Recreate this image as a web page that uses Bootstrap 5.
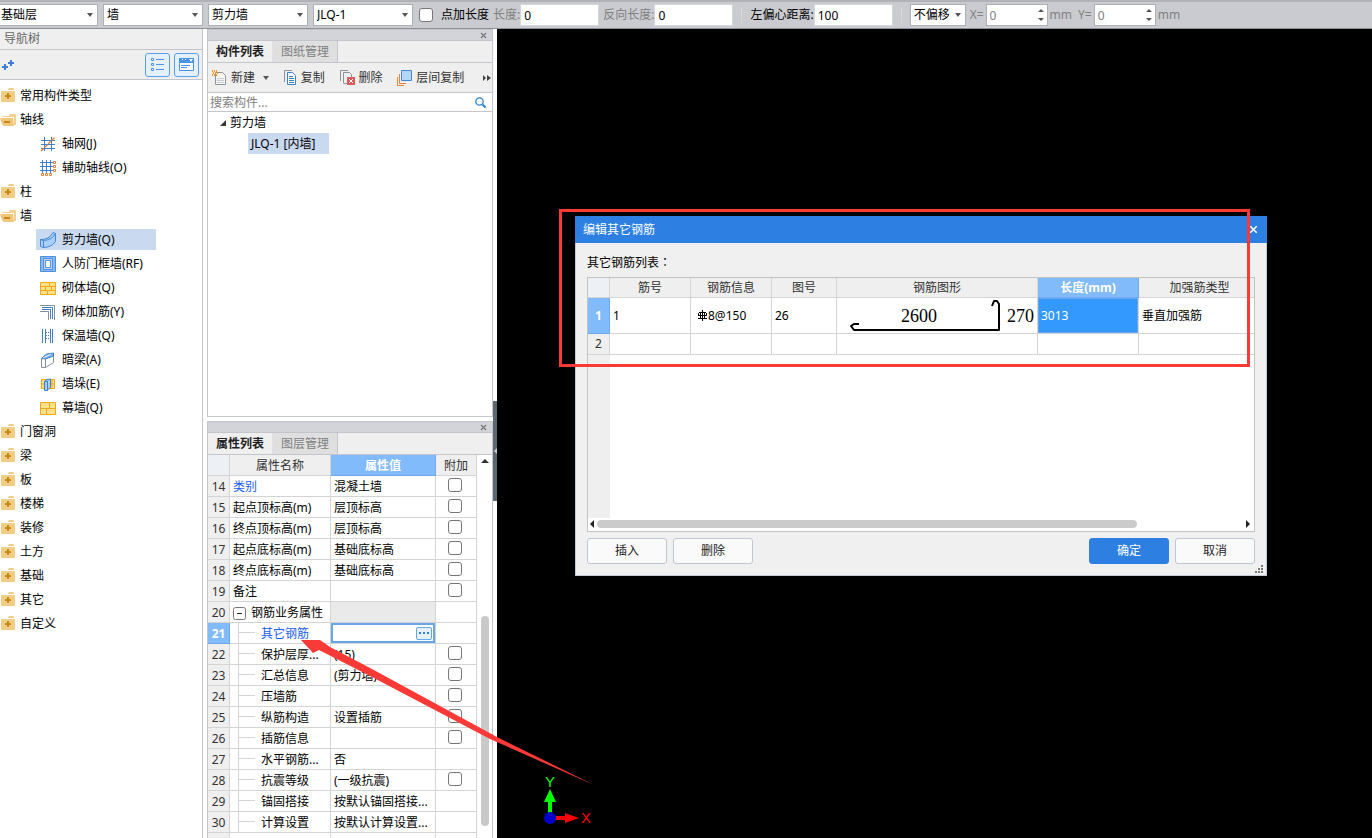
<!DOCTYPE html>
<html lang="zh-CN">
<head>
<meta charset="utf-8">
<meta name="viewport" content="width=device-width, initial-scale=1">
<title>编辑其它钢筋</title>
<link href="https://cdn.jsdelivr.net/npm/bootstrap@5.3.0/dist/css/bootstrap.min.css" rel="stylesheet">
<script src="https://cdn.jsdelivr.net/npm/bootstrap@5.3.0/dist/js/bootstrap.bundle.min.js" defer></script>
<style>
:root{--line:#c3c5cb;--grid:#d4d4d4;--face:#efefef;--pick:#c9d9f0;--head:#82bbfb;--blue:#2d80e2}
body{font-family:"Noto Sans","Noto Sans CJK SC",sans-serif;font-size:12px;line-height:18px;color:#000;background:#fff}
svg{display:block;flex:none}
button{font:inherit;color:inherit}
/* option bar */
.optbar{height:29px;background:#c9cbd0;border-top:2px solid #b0b2b8;border-bottom:1px solid #8d9096;white-space:nowrap}
.optbar .form-select,.optbar .form-control{font-size:12px;line-height:18px;border-radius:0;border:1px solid #adb0b5;padding:0 3px;height:22px;min-height:0;color:#000;flex:none}
.optbar .form-select{width:100px;padding:0 16px 0 3px;background-position:right 4px center;background-size:6px 4px;--bs-form-select-bg-img:url("data:image/svg+xml,%3csvg xmlns='http://www.w3.org/2000/svg' viewBox='0 0 6 4'%3e%3cpath fill='%23555' d='M0 0h6L3 4z'/%3e%3c/svg%3e");background-image:var(--bs-form-select-bg-img)}
.optbar .first-select{width:98px;border-left:0;padding-left:1px}
.optbar .picks{gap:5px;margin-right:6px}
.optbar .narrow{width:56px}
.optbar .form-control.plain{width:79px;border-color:#d4d6da}
.optbar .dimmed,.optbar .spin .form-control{color:#808080}
.offsets{gap:2px}
.spin .form-control{width:62px}
.spin svg{position:absolute;right:4px;top:5px}
.vsep{width:1px;height:16px;background:#d9d9d4}
.form-check-input.tick{width:14px;height:14px;margin:0;border:1px solid #777;border-radius:3px;background-color:#fff;flex:none}
/* navigation tree */
.navpane{width:203px;border-right:1px solid var(--line);flex:none}
.navhead{height:21px;background:var(--face);border-bottom:1px solid var(--line);color:#666;padding:1px 0 0 4px}
.navtools{height:30px;background:var(--face);border-bottom:1px solid var(--line);padding-right:3px}
.toolbtn{width:25px;height:24px;border:1px solid #56a0f0;border-radius:3px;background:#e6f0fc;padding:0}
.treelist{padding:4px 0 0}
.treelist a{color:#000;text-decoration:none}
.treelist .grp{height:24px;gap:4px}
.treelist .leaf{height:21px;margin:1px 46px 2px 36px;padding-left:4px;gap:6px}
.treelist .leaf.on,.objtree .on{background:var(--pick)}
/* docked panels */
.dock{width:286px;margin-left:4px;flex:none}
.dockpanel{border:1px solid var(--line)}
.upper{flex:0 0 48%}
.lower{border-bottom:0}
.grip{height:11px;background:#d3d4da;border-bottom:1px solid var(--line);padding-right:5px}
.grip button,.plainbtn{border:0;background:none;padding:0}
.docktabs{background:var(--face);border-bottom:1px solid var(--line);height:22px;flex-wrap:nowrap}
.docktabs .nav-link{height:21px;width:65px;padding:1px 0 0;text-align:center;border:0;border-right:1px solid var(--line);border-radius:0;color:#808080;background:#dfdfe0}
.docktabs .nav-link.active{color:#222;font-weight:700;background:var(--face)}
.cmds{height:30px;background:var(--face);border-bottom:1px solid var(--line);color:#333;padding:0 1px 0 4px;white-space:nowrap}
.finder{height:19px;border-bottom:1px solid var(--line);padding-right:6px}
.finder .form-control{border:0;padding:1px 2px 0;height:18px;min-height:0;font-size:12px;line-height:17px;border-radius:0}
.finder .form-control::placeholder{color:#808080}
.objtree{line-height:21px}
.objtree .on{margin-left:40px;padding:0 8px 0 3px;width:81px;white-space:nowrap}
/* grids */
.sheet{table-layout:fixed;border-collapse:separate;border-spacing:0;margin:0;line-height:18px}
.sheet th,.sheet td{border-right:1px solid var(--grid);border-bottom:1px solid var(--grid);padding:0 3px;height:21px;white-space:nowrap;overflow:hidden;vertical-align:middle;font-weight:400;background:#fff}
.sheet thead th{background:var(--face);text-align:center;color:#333}
.sheet thead th:first-child{background:#edf0f5}
.sheet tbody th{background:var(--face);text-align:center;padding:0;color:#333}
.sheet thead th.hot,.sheet tbody th.hot{background:var(--head);color:#fff;font-weight:700;border-color:#6faaf0}
.sheet a{color:#1a5cf5;text-decoration:none}
.sheet.props{width:269px}
.props thead th,.props tbody th,.props tbody td{padding-top:2px}
.props tbody td:last-child{padding:0 4px 2px 2px}
.props tbody td.editing{padding-top:0}
.props .tick{display:block;margin:0 auto}
.props td.sub{padding-left:31px;background:linear-gradient(var(--grid),var(--grid)) 8px 0/1px 100% no-repeat,linear-gradient(var(--grid),var(--grid)) 8px 9px/17px 1px no-repeat,#fff}
.props td.void{background:#eaeaea}
.props td.editing{box-shadow:inset 0 0 0 2px #68a6ea}
.vbar{width:15px;flex:none}
.vbar .thumb{width:8px;background:#c9c9c9;border-radius:4px;margin:153px auto 0;height:210px}
.morebtn{width:16px;height:13px;border:1px solid #68a6ea;border-radius:2px;background:#e6f1fd;padding:0}
/* drawing area */
.canvas{background:#000;margin-left:4px;min-width:0}
.collapser{position:absolute;left:-4px;top:46%;width:4px;height:100px;border:0;padding:0;background:#5d6770}
.ucs{position:absolute;left:36px;bottom:0}
.dlg{position:absolute;left:78px;top:187px;width:692px;background:#f0f0f0;border:1px solid #c5cbd3;border-top:0}
.dlghead{height:27px;margin:0 -1px;background:var(--blue);color:#fff;padding:0 9px 0 8px}
.dlgbody{padding:10px 11px 11px}
.colon{font-family:"Noto Sans CJK TC",sans-serif}
.listbox{border:1px solid #c3c3c3;background:linear-gradient(var(--face),var(--face)) 0 0/22px 240px no-repeat,#fff;height:255px;margin-top:5px;overflow:hidden}
.rebar{width:673px}
.rebar thead th{height:20px}
.rebar .tall td,.rebar .tall th{height:36px}
.rebar td.cell-on{background:#3399ff;color:#fff;box-shadow:inset 0 0 0 1px #68a6ea}
.rebar .tall .pic{padding:0}
.hbar{height:14px;padding:0 4px 0 2px;gap:3px}
.hbar .thumb{height:8px;width:540px;border-radius:4px;background:#cbcbcb}
.dlgbtns{gap:6px;margin-top:6px}
.dlg .btn{width:80px;height:26px;font-size:12px;line-height:18px;padding:0;border-radius:3px;background:#fafafa;border-color:#bfc5d3;color:#222}
.dlg .btn.btn-primary{background:var(--blue);border-color:var(--blue);color:#fff}
.sizer{position:absolute;right:3px;bottom:2px}
/* markup over the workspace */
.mark-box{position:absolute;left:559px;top:209px;width:691px;height:158px;border:3px solid #fb3a38;pointer-events:none;z-index:5}
.mark-arrow{position:absolute;left:300px;top:638px;pointer-events:none;z-index:5}
</style>
</head>
<body class="vh-100 d-flex flex-column overflow-hidden position-relative">

<svg width="0" height="0" class="position-absolute" aria-hidden="true">
  <symbol id="i-closed" viewBox="0 0 16 16"><path fill="#f2cd87" d="M8 2q0-2 2-2h3q1 0 1 1v1zM1 4q0-1 1-1h12q1 0 1 1v9q0 1-1 1H2q-1 0-1-1z"/><path fill="#c88a1c" d="M7 5h2v2h2v2H9v2H7V9H5V7h2z"/></symbol>
  <symbol id="i-open" viewBox="0 0 16 16"><path fill="#f3cf8b" d="M2 4h7l1-2h5q1 0 1 1v10h-2V5H3z"/><path fill="#efc67a" d="M0 6h13l1 8H4Q2 14 0 6z"/><path fill="#c88a1c" d="M4 9h6v2H4z"/></symbol>
  <symbol id="i-grid" viewBox="0 0 16 16"><path stroke="#3f7fce" d="M4.500 1v14M11.500 1v14M1 4.500h14M1 8.500h14M1 12.500h14"/><path stroke="#e8803a" stroke-width="1.400" stroke-dasharray="4 1" d="M1 15 15 1"/></symbol>
  <symbol id="i-grid2" viewBox="0 0 16 16"><path stroke="#3f7fce" d="M2.500 0v13M6.500 0v13M10.500 0v13M0 2.500h13M0 6.500h13M0 10.500h13"/><path fill="#fff" stroke="#e8803a" d="M1.500 13.500h2v2h-2zM5.500 13.500h2v2h-2zM9.500 13.500h2v2h-2zM13.500 1.500h2v2h-2zM13.500 5.500h2v2h-2zM13.500 9.500h2v2h-2z"/></symbol>
  <symbol id="i-shear" viewBox="0 0 16 16"><path fill="#a9cef8" stroke="#4388d6" stroke-linejoin="round" d="M.5 7.500Q9 8 13 .5l2.500 1v8Q12 15 4 15.500l-3.500-1z"/><path fill="none" stroke="#4388d6" d="M.5 7.500l3 1v7M3.500 8.500Q12 8 15.500 1.500"/></symbol>
  <symbol id="i-frame" viewBox="0 0 16 16"><path fill="#8bb9f3" stroke="#4d8ee0" d="M.5.500h15v15H.500z"/><path fill="#c4dcfa" stroke="#4d8ee0" d="M3.500 2.500h9v11h-9z"/><path fill="#fff" stroke="#4d8ee0" d="M5.500 4.500h5v7h-5z"/></symbol>
  <symbol id="i-brick" viewBox="0 0 16 16"><path fill="#fde08b" stroke="#f0a911" d="M.5 2.500h15v12H.500zM.500 6.500h15M.500 10.500h15M9.500 2.500v4M5.500 6.500v4M11.500 6.500v4M7.500 10.500v4"/></symbol>
  <symbol id="i-tie" viewBox="0 0 16 16"><g fill="none"><path stroke="#8a8f98" d="M0 1.500h14.500V16M0 7.500h8.500V16"/><path stroke="#3f7fce" d="M2 3.500h10.500V15M2 5.500h8.500V15"/></g></symbol>
  <symbol id="i-insul" viewBox="0 0 16 16"><path stroke="#3f7fce" d="M2.500 1v14M5.500 1v14M10.500 1v14M12.500 1v14"/><path stroke="#3f7fce" stroke-dasharray="1 1" d="M6 4.500h5M6 7.500h5M6 10.500h5"/></symbol>
  <symbol id="i-beam" viewBox="0 0 16 16"><path fill="#fff" stroke="#878e98" d="M1.500 6.500h4v9h-4zM5.500 15.500l8-5v-9"/><path fill="#82b4ef" stroke="#3f7fce" d="M1.500 6.500l5-4.500 7-1v3l-8 3z"/><path stroke="#e3effc" d="M3 6l8-4"/></symbol>
  <symbol id="i-pier" viewBox="0 0 16 16"><path fill="#fde08b" stroke="#f0a911" d="M1.500 3.500h13v9h-13zM1 8h14M12 3v9"/><path fill="#a9cef8" stroke="#3f7fce" d="M4.500 5.500h3v9h-3zM7.500 14l3-2.500V3L7 3.500 4.500 5.500h3z"/></symbol>
  <symbol id="i-curtain" viewBox="0 0 16 16"><path fill="#fde08b" stroke="#f0a911" d="M.5 2.500h15v12H.500zM.500 8.500h15M9.500 2.500v6M6.500 8.500v6"/></symbol>
  <symbol id="i-x" viewBox="0 0 7 7"><path stroke="currentColor" stroke-width="1.200" d="M1 1l5 5M6 1 1 6"/></symbol>
</svg>

<form class="optbar d-flex align-items-center flex-shrink-0">
  <div class="picks d-flex">
    <select class="form-select first-select" aria-label="楼层"><option>基础层</option></select>
    <select class="form-select" aria-label="构件分类"><option>墙</option></select>
    <select class="form-select" aria-label="构件类型"><option>剪力墙</option></select>
    <select class="form-select" aria-label="构件"><option>JLQ-1</option></select>
  </div>
  <input class="form-check-input tick" type="checkbox" id="ptlen">
  <label for="ptlen" class="ms-2">点加长度</label>
  <label for="len" class="dimmed ms-1">长度:</label><input id="len" class="form-control plain" value="0">
  <label for="rlen" class="dimmed ms-1">反向长度:</label><input id="rlen" class="form-control plain" value="0">
  <span class="vsep mx-2"></span>
  <label for="ecc">左偏心距离:</label><input id="ecc" class="form-control plain" value="100">
  <span class="vsep mx-2"></span>
  <select class="form-select narrow" aria-label="偏移"><option>不偏移</option></select>
  <div class="offsets d-flex align-items-center ms-1">
    <label for="dx" class="dimmed">X=</label>
    <span class="spin position-relative"><input id="dx" class="form-control" value="0"><svg width="6" height="12" fill="#555"><path d="M0 3l3-3 3 3zM0 9l3 3 3-3z"/></svg></span>
    <span class="dimmed">mm</span>
    <label for="dy" class="dimmed ms-1">Y=</label>
    <span class="spin position-relative"><input id="dy" class="form-control" value="0"><svg width="6" height="12" fill="#555"><path d="M0 3l3-3 3 3zM0 9l3 3 3-3z"/></svg></span>
    <span class="dimmed">mm</span>
  </div>
</form>

<main class="d-flex flex-grow-1" style="min-height:0">
  <nav class="navpane" aria-label="导航树">
    <div class="navhead">导航树</div>
    <div class="navtools d-flex align-items-center gap-1">
      <button class="plainbtn me-auto" aria-label="添加"><svg width="15" height="14" stroke="#3a7fd5" stroke-width="2"><path d="M2 9h6M5 6v6M8 5h6M11 2v6"/></svg></button>
      <button class="toolbtn d-flex align-items-center justify-content-center" aria-label="列表"><svg width="13" height="14" fill="none" stroke="#4a93ea"><path d="M.5.500h2v2h-2zM.500 5.500h2v2h-2zM.500 10.500h2v2h-2zM5 1.500h8M5 6.500h8M5 11.500h8"/></svg></button>
      <button class="toolbtn d-flex align-items-center justify-content-center" aria-label="面板"><svg width="15" height="13" fill="none" stroke="#4a93ea"><path d="M.5.500h14v12H.500z" fill="#fff"/><path fill="#4a93ea" d="M.5.500h14v4H.500z"/><path d="M2 7.500h9M2 9.500h6"/><path fill="#fff" stroke="none" d="M10 1h4l-2 3zM3 1h1v1H3zM6 1h1v1H6z"/></svg></button>
    </div>
    <div class="treelist d-flex flex-column" id="tree"></div>
  </nav>

  <div class="dock d-flex flex-column">
    <section class="dockpanel upper">
      <div class="grip d-flex align-items-center justify-content-end"><button aria-label="关闭" style="color:#777"><svg width="7" height="7"><use href="#i-x"/></svg></button></div>
      <div class="nav nav-tabs docktabs"><button class="nav-link active">构件列表</button><button class="nav-link">图纸管理</button></div>
      <div class="cmds d-flex align-items-center justify-content-between">
        <button class="plainbtn d-flex align-items-center gap-1"><svg width="15" height="15" fill="none"><path fill="#f7f7f7" stroke="#8b939c" d="M3.500 2.500h7l3 3v9h-10z"/><path stroke="#c9ccd1" d="M5 8.500h7M5 10.500h7M5 12.500h7"/><path stroke="#f0941f" stroke-width="2" stroke-dasharray="1 1" d="M0 1h5M1 3h5M0 5h5"/></svg>新建<svg class="ms-1" width="6" height="4" fill="#555"><path d="M0 0h6L3 4z"/></svg></button>
        <button class="plainbtn d-flex align-items-center gap-1"><svg width="13" height="15" fill="none"><path stroke="#8b939c" d="M.5 12V.500H8"/><path fill="#fff" stroke="#3f7fce" d="M3.500 2.500h5l3 3v9h-8z"/><path stroke="#3f7fce" d="M5 6.500h4M5 8.500h5M5 10.500h5M5 12.500h5"/></svg>复制</button>
        <button class="plainbtn d-flex align-items-center gap-1"><svg width="15" height="15" fill="none"><path stroke="#8b939c" d="M.5 11V.500H8M3.500 13V2.500h6l2 2V7M3.500 13.500H7"/><path fill="#dd5a5a" d="M7 7h8v8H7z"/><path stroke="#fff" d="M9 9l4 4M13 9l-4 4"/></svg>删除</button>
        <button class="plainbtn d-flex align-items-center gap-1"><svg width="15" height="16" fill="none"><path stroke="#e8803a" d="M.5 7v8.500H7"/><path stroke="#e8803a" d="M2.500 4v9.500H9"/><path fill="#b5d6fb" stroke="#4388d6" d="M4.500.500h10v10h-10z"/></svg>层间复制</button>
        <button class="plainbtn ms-1" aria-label="更多"><svg width="8" height="6" fill="#444"><path d="M0 0l3 3-3 3zM4 0l4 3-4 3z"/></svg></button>
      </div>
      <div class="finder d-flex align-items-center"><input class="form-control" placeholder="搜索构件..." aria-label="搜索构件"><svg width="11" height="11" fill="none" stroke="#2a80c8"><circle cx="4.500" cy="4.500" r="3.700" stroke-width="1.300"/><path stroke-width="2" d="M7.500 7.500l3 3"/></svg></div>
      <div class="objtree">
        <div class="d-flex align-items-center ps-2"><svg class="mx-1" width="6" height="6" fill="#333"><path d="M6 0v6H0z"/></svg>剪力墙</div>
        <div class="on">JLQ-1 [内墙]</div>
      </div>
    </section>

    <section class="dockpanel lower flex-grow-1 mt-1 overflow-hidden">
      <div class="grip d-flex align-items-center justify-content-end"><button aria-label="关闭" style="color:#777"><svg width="7" height="7"><use href="#i-x"/></svg></button></div>
      <div class="nav nav-tabs docktabs"><button class="nav-link active">属性列表</button><button class="nav-link">图层管理</button></div>
      <div class="d-flex">
        <table class="sheet props">
          <colgroup><col style="width:22px"><col style="width:101px"><col style="width:105px"><col style="width:41px"></colgroup>
          <thead><tr><th></th><th>属性名称</th><th class="hot">属性值</th><th>附加</th></tr></thead>
          <tbody id="props"></tbody>
        </table>
        <div class="vbar"><svg class="mx-auto mt-1" width="8" height="4" fill="#333"><path d="M0 4l4-4 4 4z"/></svg><div class="thumb"></div></div>
      </div>
    </section>
  </div>

  <section class="canvas flex-grow-1 position-relative">
    <button class="collapser" aria-label="折叠"><svg width="4" height="6" fill="#c9ced3"><path d="M4 0v6L1 3z"/></svg></button>
    <svg class="ucs" width="64" height="64" font-family="Liberation Sans" font-size="15"><path fill="#0f0" d="M15 22h4v22h-4zM11 28l6-13 6 13z"/><path fill="#f00" d="M17 42h17v4H17zM32 39l14 5-14 5z"/><circle cx="17" cy="44" r="6" fill="#0000c8"/><text x="12" y="13" fill="#0f0">Y</text><text x="48" y="49" fill="#f00">X</text></svg>

    <div class="dlg" role="dialog" aria-labelledby="dlgtitle">
      <div class="dlghead d-flex align-items-center justify-content-between"><span id="dlgtitle">编辑其它钢筋</span><button class="plainbtn" aria-label="关闭"><svg width="9" height="9"><use href="#i-x"/></svg></button></div>
      <div class="dlgbody">
        <div>其它钢筋列表<span class="colon" lang="zh-TW">：</span></div>
        <div class="listbox d-flex flex-column">
          <table class="sheet rebar">
            <colgroup><col style="width:22px"><col style="width:81px"><col style="width:81px"><col style="width:65px"><col style="width:201px"><col style="width:101px"><col style="width:122px"></colgroup>
            <thead><tr><th></th><th>筋号</th><th>钢筋信息</th><th>图号</th><th>钢筋图形</th><th class="hot">长度(mm)</th><th>加强筋类型</th></tr></thead>
            <tbody>
              <tr class="tall"><th class="hot">1</th><td>1</td><td><span class="d-flex align-items-center ps-1"><svg width="10" height="11" fill="none" stroke="#000"><path d="M4.500 0v11M2.500 2v6M6.500 2v6M0 8.500h9M1 2.500h7M.500 3v3M8.500 3v3M0 5.500h9"/></svg>8@150</span></td><td>26</td>
                <td class="pic"><svg width="200" height="35" font-family="Liberation Serif" font-size="18"><path fill="none" stroke="#000" stroke-width="2" stroke-linejoin="round" d="M22 26h-5l-3 2 3 4h145V6l-2-3h-3l-2 5"/><text x="64" y="24">2600</text><text x="170" y="24">270</text></svg></td>
                <td class="cell-on">3013</td><td>垂直加强筋</td></tr>
              <tr><th>2</th><td></td><td></td><td></td><td></td><td></td><td></td></tr>
            </tbody>
          </table>
          <div class="hbar d-flex align-items-center mt-auto"><svg width="4" height="8" fill="#222"><path d="M4 0v8L0 4z"/></svg><div class="thumb"></div><svg class="ms-auto" width="4" height="8" fill="#222"><path d="M0 0v8l4-4z"/></svg></div>
        </div>
        <div class="dlgbtns d-flex">
          <button class="btn btn-light">插入</button><button class="btn btn-light">删除</button>
          <button class="btn btn-primary ms-auto">确定</button><button class="btn btn-light">取消</button>
        </div>
      </div>
      <svg class="sizer" width="8" height="8" fill="#777"><path d="M6 0h2v2H6zM3 3h2v2H3zM6 3h2v2H6zM0 6h2v2H0zM3 6h2v2H3zM6 6h2v2H6z"/></svg>
    </div>
  </section>
</main>

<div class="mark-box"></div>
<svg class="mark-arrow" width="296" height="148"><path fill="#fb3a38" d="M1 2H20L30 9 72 31 197 99 294 147 190 101 72 39 19 12 13 15z"/></svg>

<script>
const nav = [
  ['closed','常用构件类型'],['open','轴线'],['','轴网(J)','grid'],['','辅助轴线(O)','grid2'],['closed','柱'],['open','墙'],
  ['','剪力墙(Q)','shear',1],['','人防门框墙(RF)','frame'],['','砌体墙(Q)','brick'],['','砌体加筋(Y)','tie'],['','保温墙(Q)','insul'],
  ['','暗梁(A)','beam'],['','墙垛(E)','pier'],['','幕墙(Q)','curtain'],['closed','门窗洞'],['closed','梁'],['closed','板'],
  ['closed','楼梯'],['closed','装修'],['closed','土方'],['closed','基础'],['closed','其它'],['closed','自定义']];
document.getElementById('tree').innerHTML = nav.map(([folder,name,icon,on]) =>
  `<a href="#" class="d-flex align-items-center ${folder ? 'grp' : 'leaf'} ${on ? 'on' : ''}"><svg width="16" height="16"><use href="#i-${folder || icon}"/></svg>${name}</a>`).join('');

// name, value, has tick box, kind
const rows = [
  ['<a href="#">类别</a>','混凝土墙',1],['起点顶标高(m)','层顶标高',1],['终点顶标高(m)','层顶标高',1],['起点底标高(m)','基础底标高',1],
  ['终点底标高(m)','基础底标高',1],['备注','',1],['钢筋业务属性','',0,'group'],['<a href="#">其它钢筋</a>','',0,'edit'],
  ['保护层厚...','(15)',1,'sub'],['汇总信息','(剪力墙)',1,'sub'],['压墙筋','',1,'sub'],['纵筋构造','设置插筋',1,'sub'],
  ['插筋信息','',1,'sub'],['水平钢筋...','否',0,'sub'],['抗震等级','(一级抗震)',1,'sub'],['锚固搭接','按默认锚固搭接...',0,'sub'],
  ['计算设置','按默认计算设置...',0,'sub'],['','',0,'rest']];
const minus = '<svg width="13" height="13" fill="#fff" stroke="#777"><rect x=".5" y=".5" width="12" height="12" rx="2"/><path stroke="#222" d="M4 6.500h5"/></svg>';
const more = '<button class="morebtn d-block ms-auto" aria-label="编辑"><svg width="14" height="11" fill="#2d80e2"><path d="M2 4h2v2H2zM6 4h2v2H6zM10 4h2v2h-2z"/></svg></button>';
document.getElementById('props').innerHTML = rows.map(([name,value,tick,kind],i) => {
  const label = kind === 'group' ? `<span class="d-flex align-items-center" style="gap:5px">${minus}${name}</span>` : name;
  const child = kind === 'sub' || kind === 'edit';
  return `<tr><th class="${kind === 'edit' ? 'hot' : ''}">${kind === 'rest' ? '' : i + 14}</th><td class="${child ? 'sub' : ''}">${label}</td>`
    + `<td class="${kind === 'group' ? 'void' : kind === 'edit' ? 'editing' : ''}">${kind === 'edit' ? more : value}</td>`
    + `<td>${tick ? `<input type="checkbox" class="form-check-input tick" aria-label="附加 ${i + 14}">` : ''}</td></tr>`;
}).join('');
</script>
</body>
</html>
